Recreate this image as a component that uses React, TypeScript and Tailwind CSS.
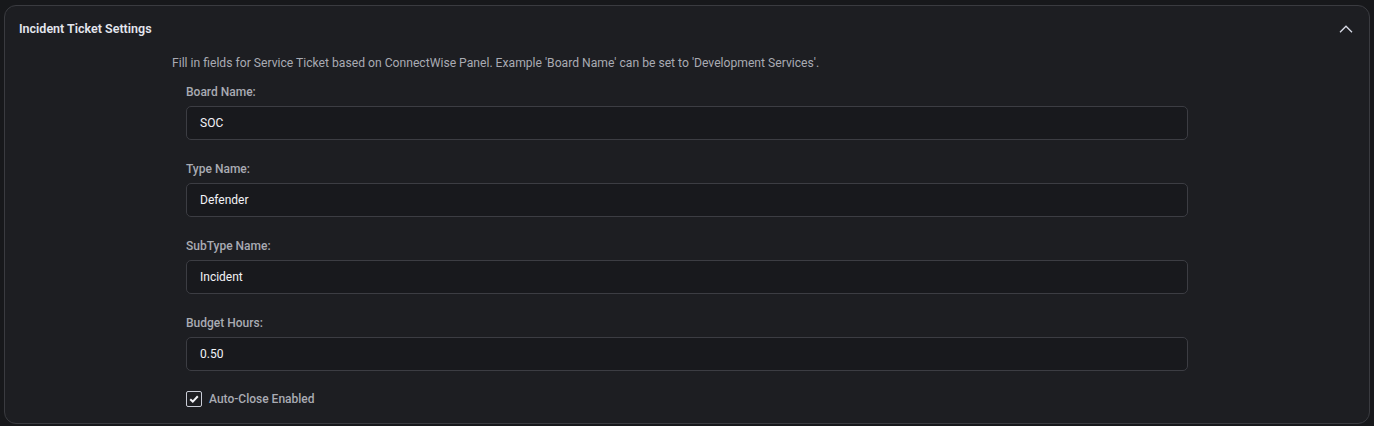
const fields = [
  { label: 'Board Name:', value: 'SOC' },
  { label: 'Type Name:', value: 'Defender' },
  { label: 'SubType Name:', value: 'Incident' },
  { label: 'Budget Hours:', value: '0.50' },
]

export default function App() {
  return (
    <div className="min-h-[426px] bg-[#17181b] px-[4px] pt-[5px] pb-[3px] font-['Roboto',sans-serif]">
      <div className="rounded-[12px] border border-[#3a3b40] bg-[#1d1e22]">
        {/* Header */}
        <div className="flex h-[46px] items-center justify-between pl-[14px] pr-[14px]">
          <h3 className="text-[12.5px] font-semibold text-[#e4e6ee]">Incident Ticket Settings</h3>
          <svg width="14" height="8" viewBox="0 0 14 8" fill="none" className="mr-[2px] -mt-[1px]">
            <path d="M1 7.2 L7 1.2 L13 7.2" stroke="#d8dbe6" strokeWidth="1.3" />
          </svg>
        </div>

        {/* Body */}
        <div className="pl-[167px] pb-[15px]">
          <p className="text-[12.15px] text-[#a9abb3] mt-[2px]">
            Fill in fields for Service Ticket based on ConnectWise Panel. Example 'Board Name' can be set to 'Development Services'.
          </p>

          <div className="pl-[14px] pt-[13px] flex flex-col gap-[22px]">
            {fields.map((f) => (
              <div key={f.label} className="flex flex-col">
                <label className="text-[12px] font-medium text-[#a9abb3] leading-[14px] mb-[7px]">{f.label}</label>
                <div className="flex h-[34px] w-[1002px] items-center rounded-[5px] border border-[#3c3d43] bg-[#18191d] px-[13px] text-[12px] text-[#f2f3f7]">
                  {f.value}
                </div>
              </div>
            ))}

            <div className="flex items-center gap-[7px] -mt-[3px]">
              <div className="flex h-[16px] w-[16px] items-center justify-center rounded-[2px] border border-[#c9ccd6]">
                <svg width="10" height="8" viewBox="0 0 10 8" fill="none">
                  <path d="M1.2 4.2 L3.8 6.6 L8.8 1.2" stroke="#f2f3f7" strokeWidth="2" />
                </svg>
              </div>
              <span className="text-[12px] font-medium text-[#a9abb3]">Auto-Close Enabled</span>
            </div>
          </div>
        </div>
      </div>
    </div>
  )
}
